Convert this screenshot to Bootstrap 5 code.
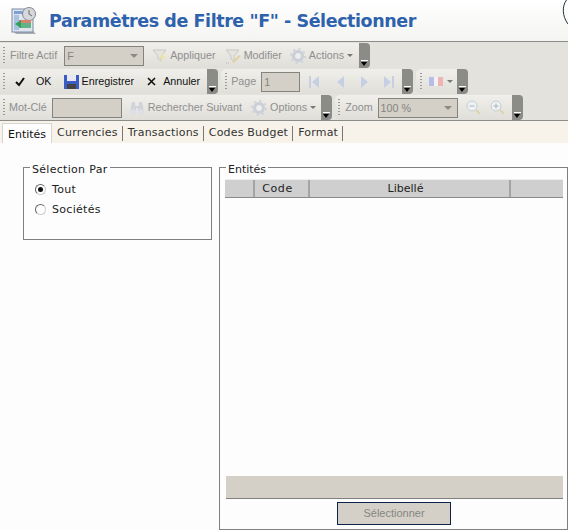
<!DOCTYPE html>
<html lang="fr">
<head>
    <meta charset="UTF-8">
    <title>Paramètres de Filtre</title>
    <link href="https://cdn.jsdelivr.net/npm/bootstrap@5.3.0/dist/css/bootstrap.min.css" rel="stylesheet">
    <style>
        html, body { height: 530px; overflow: hidden; }
        body { background: #fdfdfd; color: #222; font-family: "Liberation Sans", Arial, sans-serif; font-size: 10.75px; line-height: 1; }
        .ml2 { margin-left: 2px; } .ml3 { margin-left: 3px; } .ml4 { margin-left: 4px; } .ml5 { margin-left: 5px; }
        .ml6 { margin-left: 6px; } .ml7 { margin-left: 7px; } .ml8 { margin-left: 8px; } .ml9 { margin-left: 9px; }
        .ml10 { margin-left: 10px; } .ml12 { margin-left: 12px; } .ml13 { margin-left: 13px; } .ml15 { margin-left: 15px; } .ml17 { margin-left: 17px; }
        .pr4 { margin-right: 4px; } .pr5 { margin-right: 5px; } .pr6 { margin-right: 6px; } .pr7 { margin-right: 7px; } .pr8 { margin-right: 8px; }
        .page-head { height: 42px; padding-top: 1px; border-bottom: 1px solid #8c8c88; background: linear-gradient(#fff, #f4f4f2); position: relative; }
        .page-title { margin: 0 0 0 49px; font-family: "DejaVu Sans", sans-serif; font-size: 17.5px; font-weight: 700; letter-spacing: -.43px; color: #2e62ac; white-space: nowrap; }
        .head-logo { position: absolute; top: 5px; left: 10px; }
        .corner-arc { position: absolute; top: 0; right: 0; }
        .tool-area { background: #e3e2dc; height: 79px; border-bottom: 1px solid #8c8c88; }
        .tool-row { height: 26px; padding-top: 1px; }
        .tool-group { height: 25px; margin-right: 3px; background: linear-gradient(#f0efeb, #dfded8); border-radius: 0 5px 5px 0; position: relative; padding-right: 11px; }
        .tool-group.inset { border-radius: 5px; }
        .tool-grip { width: 2px; height: 17px; background-image: linear-gradient(#9a9a94 50%, transparent 50%); background-size: 2px 3px; flex: none; }
        .tool-handle { position: absolute; top: 0; right: 0; bottom: 0; width: 11px; background: #8b8b87; border-radius: 0 4px 4px 0; }
        .tool-handle::before { content: ""; position: absolute; left: 2px; bottom: 7px; width: 7px; height: 1px; background: #fff; }
        .tool-handle::after { content: ""; position: absolute; left: 2px; bottom: 2px; border: 3.5px solid transparent; border-top: 4px solid #000; border-bottom: 0; }
        .tool-label { color: #8f8f8f; white-space: nowrap; }
        .tool-label.on { color: #111; }
        .off-field { background: #d4d0c8; border: 1px solid #84847e; height: 20px; color: #85857f; padding: 4px 2px; position: relative; flex: none; }
        .off-field.drop::after { content: ""; position: absolute; right: 5px; top: 7px; border: 4px solid transparent; border-top: 4px solid #8b8b85; border-bottom: 0; }
        .field-80 { width: 80px; } .field-70 { width: 70px; } .field-39 { width: 39px; }
        .mini-caret { width: 0; height: 0; border: 3px solid transparent; border-top: 3px solid #777; border-bottom: 0; flex: none; }
        .tool-group svg { flex: none; }
        .tab-strip { height: 22px; background: #f7f3ea; padding-left: 2px; font-family: "DejaVu Sans", sans-serif; font-size: 11px; letter-spacing: .2px; }
        .tab-item { padding: 0 4px 0 5px; height: 15px; margin-top: 5px; border-right: 1px solid #777; color: #333; white-space: nowrap; line-height: 13px; }
        .tab-item.active-tab { margin-top: 2px; height: 20px; padding: 4px 5px 0 5px; background: #fdfdfd; border: 1px solid #d8d5cc; border-bottom: 0; color: #111; letter-spacing: 0; }
        .form-zone { padding: 18px 0 0 23px; font-family: "DejaVu Sans", sans-serif; font-size: 11px; letter-spacing: .3px; color: #222; }
        .group-box { border: 1px solid #808080; margin: 0; padding: 0; min-width: 0; }
        .group-box legend { float: none; width: auto; font-size: 11px; line-height: 12px; padding: 0 2px; position: relative; top: 3px; }
        .select-box { width: 189px; height: 79px; padding: 6px 0 0 11px; margin-right: 7px; flex: none; }
        .select-box legend { margin: 0 0 0 -5px; letter-spacing: .3px; }
        .radio-line { height: 20px; }
        .radio-dot { width: 11px; height: 11px; border-radius: 50%; border: 1px solid #666; border-right-color: #ccc; border-bottom-color: #ccc; background: #fff; margin-right: 6px; position: relative; flex: none; }
        .radio-dot.sel::after { content: ""; position: absolute; inset: 2px; border-radius: 50%; background: #111; }
        .entity-box { width: 349px; height: 369px; padding: 6px 4px 0 5px; flex: none; }
        .entity-box legend { margin: 0 0 0 1px; letter-spacing: 0; }
        .grid-head { height: 19px; background: #cfcfcf; border-top: 1px solid #eee; border-bottom: 1px solid #8a8a8a; }
        .grid-cell { border-right: 2px solid #a4a4a4; text-align: center; line-height: 17px; flex: none; }
        .col-blank { width: 30px; }
        .col-code { width: 55px; padding-right: 8px; letter-spacing: .6px; }
        .col-label { width: 201px; padding-right: 8px; letter-spacing: 0; }
        .grid-body { height: 278px; }
        .grid-foot { height: 23px; margin-left: 1px; background: #d4d0c8; border-bottom: 1px solid #808080; }
        .pick-btn { width: 114px; height: 23px; margin: 3px 0 0 112px; background: #d4d0c8; border: 1px solid #0f2348; border-radius: 0; color: #85857f; font-size: 11px; padding: 0; letter-spacing: 0; font-family: "Liberation Sans", sans-serif; display: block; }
    </style>
</head>
<body>
    <header class="page-head d-flex align-items-center">
        <svg class="head-logo" width="28" height="30" viewBox="0 0 28 30">
            <path d="M3 26h20l3 3H6z" fill="#a9acb2"/>
            <rect x="2" y="4" width="21" height="23" fill="#dfe5ee" stroke="#7b8aa3"/>
            <rect x="4" y="6" width="11" height="3" fill="#7f9fd4"/>
            <rect x="4" y="10" width="5" height="15" fill="#a9c0e0"/>
            <circle cx="19" cy="9" r="6.5" fill="#d6d8dc" stroke="#85888f"/>
            <path d="M19 5v4l3 2" stroke="#666" fill="none"/>
            <rect x="9" y="15" width="12" height="3" fill="#d9826f"/>
            <rect x="9" y="18" width="12" height="5" fill="#62b487"/>
            <path d="M5 19l6-4v8z" fill="#2fa05a"/>
        </svg>
        <h1 class="page-title">Paramètres de Filtre "F" - Sélectionner</h1>
        <svg class="corner-arc" width="6" height="26" viewBox="0 0 6 26"><path d="M4.5 0C0 6 0 16 6 24" fill="none" stroke="#20333f"/></svg>
    </header>

    <div class="tool-area">
        <div class="tool-row d-flex">
            <div class="tool-group d-flex align-items-center">
                <span class="tool-grip ml3"></span>
                <span class="tool-label ml5">Filtre Actif</span>
                <span class="off-field drop field-80 ml7">F</span>
                <svg class="ml8" width="16" height="16" viewBox="0 0 16 16"><path d="M1 2h13L9 8v5l-3-2V8z" fill="#e4e4e0" stroke="#c9c9c4"/><path d="M11 5l-4 5h3l-2 5 6-7h-3l2-3z" fill="#ece2ae"/></svg>
                <span class="tool-label ml2">Appliquer</span>
                <svg class="ml9" width="17" height="16" viewBox="0 0 17 16"><path d="M1 2h13L9 8v5l-3-2V8z" fill="#e4e4e0" stroke="#c9c9c4"/><path d="M8 13l6-6 2 1-6 6-3 1z" fill="#e0d2a0"/><path d="M1 15h4" stroke="#b8b8b2" stroke-dasharray="1 1"/></svg>
                <span class="tool-label ml2">Modifier</span>
                <svg class="ml8" width="16" height="16" viewBox="0 0 16 16"><circle cx="8" cy="8" r="4.5" fill="#eceded" stroke="#ccced8" stroke-width="3"/><circle cx="8" cy="8" r="7" fill="none" stroke="#d2d4dd" stroke-width="2" stroke-dasharray="2.5 3"/></svg>
                <span class="tool-label ml3">Actions</span>
                <span class="mini-caret ml3 pr6"></span>
                <span class="tool-handle"></span>
            </div>
        </div>
        <div class="tool-row d-flex">
            <div class="tool-group d-flex align-items-center">
                <span class="tool-grip ml3"></span>
                <svg class="ml9" width="12" height="10" viewBox="0 0 12 10"><path d="M2 5l3 3 5-7" fill="none" stroke="#111" stroke-width="2"/></svg>
                <span class="tool-label on ml10">OK</span>
                <svg class="ml12" width="15" height="16" viewBox="0 0 15 16"><rect y="1" width="15" height="14" fill="#3a5cc4"/><rect x="3" y="1" width="9" height="6" fill="#e8e8f0"/><rect x="3" y="10" width="9" height="5" fill="#444"/></svg>
                <span class="tool-label on ml3">Enregistrer</span>
                <svg class="ml13" width="9" height="9" viewBox="0 0 9 9"><path d="M1 1l7 7M8 1L1 8" stroke="#111" stroke-width="1.6"/></svg>
                <span class="tool-label on ml7 pr7">Annuler</span>
                <span class="tool-handle"></span>
            </div>
            <div class="tool-group inset d-flex align-items-center">
                <span class="tool-grip ml4"></span>
                <span class="tool-label ml4">Page</span>
                <span class="off-field field-39 ml5">1</span>
                <svg class="ml9" width="10" height="14" viewBox="0 0 10 14"><path d="M0 1h2v12H0zM10 1v12L3 7z" fill="#c6d0e4"/></svg>
                <svg class="ml17" width="9" height="14" viewBox="0 0 9 14"><path d="M8 1v12L1 7z" fill="#c6d0e4"/></svg>
                <svg class="ml15" width="9" height="14" viewBox="0 0 9 14"><path d="M1 1v12l7-6z" fill="#c6d0e4"/></svg>
                <svg class="ml15 pr8" width="10" height="14" viewBox="0 0 10 14"><path d="M0 1v12l7-6zM8 1h2v12H8z" fill="#c6d0e4"/></svg>
                <span class="tool-handle"></span>
            </div>
            <div class="tool-group inset d-flex align-items-center">
                <span class="tool-grip ml4"></span>
                <svg class="ml7" width="14" height="9" viewBox="0 0 14 9"><rect width="5" height="9" fill="#b8bde8"/><rect x="5" width="4" height="9" fill="#f2f2f2"/><rect x="9" width="5" height="9" fill="#eeb4b4"/></svg>
                <span class="mini-caret ml4 pr4"></span>
                <span class="tool-handle"></span>
            </div>
        </div>
        <div class="tool-row d-flex">
            <div class="tool-group d-flex align-items-center">
                <span class="tool-grip ml3"></span>
                <span class="tool-label ml4">Mot-Clé</span>
                <span class="off-field field-70 ml5"></span>
                <svg class="ml7" width="16" height="14" viewBox="0 0 16 14"><path d="M3 1h3v4h4V1h3l2 10h-6V7H7v4H1z" fill="#d0d3da"/><circle cx="4" cy="11" r="3" fill="#dcdfe6"/><circle cx="12" cy="11" r="3" fill="#dcdfe6"/></svg>
                <span class="tool-label ml3">Rechercher Suivant</span>
                <svg class="ml9" width="16" height="16" viewBox="0 0 16 16"><circle cx="8" cy="8" r="4.5" fill="#eceded" stroke="#ccced8" stroke-width="3"/><circle cx="8" cy="8" r="7" fill="none" stroke="#d2d4dd" stroke-width="2" stroke-dasharray="2.5 3"/></svg>
                <span class="tool-label ml3">Options</span>
                <span class="mini-caret ml3 pr5"></span>
                <span class="tool-handle"></span>
            </div>
            <div class="tool-group inset d-flex align-items-center">
                <span class="tool-grip ml3"></span>
                <span class="tool-label ml5">Zoom</span>
                <span class="off-field drop field-80 ml5">100 %</span>
                <svg class="ml8" width="15" height="15" viewBox="0 0 15 15"><circle cx="6" cy="6" r="5" fill="#eef2f4" stroke="#c6ced0"/><path d="M3.5 6h5" stroke="#aab4b6"/><path d="M10 10l4 4" stroke="#dcd2ac" stroke-width="2"/></svg>
                <svg class="ml9 pr7" width="15" height="15" viewBox="0 0 15 15"><circle cx="6" cy="6" r="5" fill="#eef2f4" stroke="#c6ced0"/><path d="M3.5 6h5M6 3.5v5" stroke="#aab4b6"/><path d="M10 10l4 4" stroke="#dcd2ac" stroke-width="2"/></svg>
                <span class="tool-handle"></span>
            </div>
        </div>
    </div>

    <nav class="tab-strip d-flex">
        <span class="tab-item active-tab">Entités</span>
        <span class="tab-item">Currencies</span>
        <span class="tab-item">Transactions</span>
        <span class="tab-item">Codes Budget</span>
        <span class="tab-item">Format</span>
    </nav>

    <main class="form-zone d-flex align-items-start">
        <fieldset class="group-box select-box">
            <legend>Sélection Par</legend>
            <label class="radio-line d-flex align-items-center"><span class="radio-dot sel"></span>Tout</label>
            <label class="radio-line d-flex align-items-center"><span class="radio-dot"></span>Sociétés</label>
        </fieldset>
        <fieldset class="group-box entity-box">
            <legend>Entités</legend>
            <div class="grid-head d-flex">
                <span class="grid-cell col-blank"></span>
                <span class="grid-cell col-code">Code</span>
                <span class="grid-cell col-label">Libellé</span>
            </div>
            <div class="grid-body"></div>
            <div class="grid-foot"></div>
            <button type="button" class="btn pick-btn">Sélectionner</button>
        </fieldset>
    </main>
    <script src="https://cdn.jsdelivr.net/npm/bootstrap@5.3.0/dist/js/bootstrap.bundle.min.js"></script>
</body>
</html>
